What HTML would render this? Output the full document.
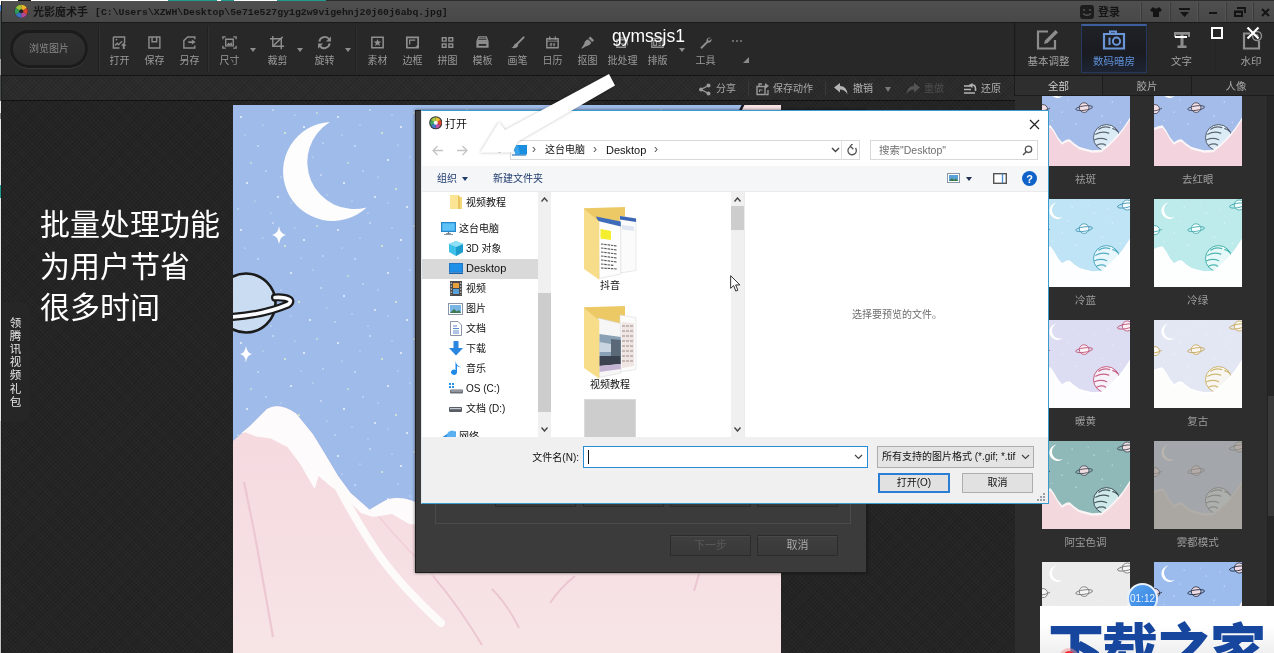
<!DOCTYPE html>
<html lang="zh-CN">
<head>
<meta charset="utf-8">
<title>光影魔术手</title>
<style>
*{box-sizing:border-box;margin:0;padding:0}
html,body{width:1274px;height:653px;overflow:hidden;background:#232323;font-family:"Liberation Sans","Noto Sans CJK SC",sans-serif;}
.abs{position:absolute}
#root{position:absolute;left:0;top:0;width:1274px;height:653px;overflow:hidden;background:#232323;opacity:.999}
.pat{background-color:#242424;background-image:repeating-linear-gradient(45deg,rgba(255,255,255,.018) 0 1px,transparent 1px 3px),repeating-linear-gradient(-45deg,rgba(0,0,0,.10) 0 1px,transparent 1px 3px);}
/* title bar */
#title{left:2px;top:1px;width:1272px;height:22px;background:linear-gradient(#4f4f4f,#484848);border-bottom:1px solid #1a1a1a}
#title .t{position:absolute;left:31px;top:3px;font:bold 11px/16px "Liberation Sans","Noto Sans CJK SC",sans-serif;color:#151515;white-space:nowrap}
#title .t b{font:bold 9.8px/16px "Liberation Mono",monospace;margin-left:7px;position:relative;top:-1px}
.wb{position:absolute;top:1px;height:20px;border-left:1px solid #3a3a3a;box-shadow:-1px 0 0 #555}
/* toolbar */
#tb{left:2px;top:23px;width:1272px;height:53px;background:#282828;border-bottom:1px solid #141414}
.ti{position:absolute;top:0;width:40px;height:52px;text-align:center;color:#9a9a9a;font-size:10px}
.ti svg{position:absolute;left:11.500px;top:12px;width:17px;height:15.100px;overflow:visible}
.ti span{position:absolute;left:-9px;right:-10px;top:30.500px;line-height:14px;white-space:nowrap}
.dd{position:absolute;top:25px;width:0;height:0;border:3px solid transparent;border-top:4px solid #8c8c8c}
.sep{position:absolute;top:3px;width:2px;height:46px;background:#212121;border-right:1px solid #303030}
.rt{position:absolute;top:1px;height:49px;text-align:center;color:#a2a2a2;font-size:10.500px;border-left:1px solid #242424}
.rt span{position:absolute;left:0;right:0;top:30px;line-height:14px}
.rt svg{position:absolute;top:5px;left:50%;margin-left:-12px;width:24px;height:21px;overflow:visible}
/* sub bar */
#sb{left:2px;top:76px;width:1013px;height:25px;border-bottom:1px solid #121212;background-color:#2b2b2b}
#sb .a{position:absolute;top:6px;line-height:14px;font-size:10px;color:#a8a8a8;white-space:nowrap}
#sb .v{position:absolute;top:5px;width:1px;height:14px;background:#3a3a3a}
/* right panel */
#rp{left:1015px;top:76px;width:259px;height:577px;background:#2d2d2d}
.stab{position:absolute;top:0;height:20px;background:#2b2b2b;border:1px solid #1c1c1c;border-top:none;color:#aaa;font-size:10.500px;line-height:21px;text-align:center}
.th{position:absolute;width:88.300px;height:88.300px;overflow:hidden}
.th svg{display:block;width:88.300px;height:88.300px}
.tl{position:absolute;width:120px;text-align:center;font-size:10.500px;line-height:14px;color:#9c9c9c}
</style>
</head>
<body>
<div id="root">
<svg width="0" height="0" style="position:absolute">
<defs>
<symbol id="scene" viewBox="0 0 88 88">
  <rect width="88" height="88" fill="var(--sky)"/>
  <g fill="var(--star)"><circle cx="30" cy="8" r=".6"/><circle cx="52" cy="14" r=".6"/><circle cx="70" cy="24" r=".6"/><circle cx="20" cy="34" r=".6"/><circle cx="60" cy="38" r=".6"/><circle cx="34" cy="46" r=".6"/><circle cx="78" cy="44" r=".5"/><circle cx="10" cy="42" r=".5"/><circle cx="46" cy="6" r=".5"/><circle cx="26" cy="22" r=".5"/><circle cx="66" cy="10" r=".5"/></g>
  <path d="M14.500 3.500A8.200 8.200 0 1 0 21 17.800A7.800 7.800 0 0 1 14.500 3.500z" fill="var(--moon)"/>
  <g stroke="var(--ln)" stroke-width=".9" fill="var(--pl)"><circle cx="42" cy="29.500" r="4.800"/><ellipse cx="42" cy="30" rx="8.500" ry="2.200" fill="none" transform="rotate(-8 42 30)"/></g>
  <g stroke="var(--ln)" stroke-width=".9" fill="var(--pl)"><circle cx="85" cy="6" r="5"/><ellipse cx="83" cy="6.500" rx="8" ry="2.200" fill="none" transform="rotate(-10 83 6)"/></g>
  <g stroke="var(--ln)" stroke-width=".9" fill="var(--pl)"><circle cx="1" cy="31" r="4.500"/><path d="M-4 33Q4 33 8 30" fill="none"/></g>
  <circle cx="64.300" cy="59.400" r="13" fill="var(--big)" stroke="var(--ln2)" stroke-width=".9"/>
  <g stroke="var(--ln2)" stroke-width="1.200" fill="none" stroke-linecap="round" opacity=".85"><path d="M56.500 51q5.500-3.500 11-1.500"/><path d="M53.500 56q6.500-3.500 13-1"/><path d="M52.500 61.500q6.500-2.500 12 0"/><path d="M54.500 67q5.500-2.500 9 0"/><path d="M70.500 50.500q3.500 .5 5 3"/></g>
  <path d="M0 49.500L4 48L8.500 47L12 52L16 59L20 64L24 61.500L27.500 61L32 65L37 68.500L42 70L50 72L59 71.500L66 66L71 61L74 58L77.500 54L81 49.500L85 43.500L88 39V88H0z" fill="var(--snow)"/>
  <path d="M0 52L4 50.500L8.500 49.500L12 54.500L16 61.500L20 66.500L24 64L27.500 63.500L32 67.500L37 71L42 72.500L50 74.500L59 74L66 68.500L71 63.500L74 60.500L77.500 56.500L81 52L85 46L88 41.500V88H0z" fill="var(--mt)"/>
</symbol>
</defs>
</svg>
<style>
.dbt{position:absolute;width:81px;height:21px;background:linear-gradient(#3f3f3f,#393939);border:1px solid #2c2c2c;box-shadow:inset 0 1px 0 #484848;color:#a8a8a8;font-size:11px;line-height:19px;text-align:center}
#od{left:421px;top:110px;width:628px;height:394px;background:#fff;border:1px solid #3a9ccc;border-left-color:#dfeaf0;overflow:hidden}
.nv{top:30px;font-size:12px;line-height:16px;color:#555}
.nt{top:30px;font-size:10px;line-height:18px;color:#111;white-space:nowrap}
.cm{top:60px;font-size:10px;line-height:16px;color:#1f3b6e;white-space:nowrap}
.tr{position:absolute;font-size:10px;line-height:18px;color:#111;white-space:nowrap}
.fn{position:absolute;width:100px;text-align:center;font-size:10px;line-height:16px;color:#111}
</style>
<!-- canvas -->
<div class="abs pat" id="canvas" style="left:2px;top:101px;width:1013px;height:552px"></div>
<!-- main picture -->
<svg class="abs" id="pic" style="left:233px;top:105px" width="548" height="548" viewBox="0 0 548 548">
  <defs>
    <pattern id="stars" width="97" height="113" patternUnits="userSpaceOnUse">
      <g fill="#e9f3ff"><circle cx="8" cy="12" r="1"/><circle cx="40" cy="5" r=".8"/><circle cx="71" cy="22" r="1.1"/><circle cx="25" cy="41" r=".8"/><circle cx="58" cy="55" r="1"/><circle cx="88" cy="70" r=".8"/><circle cx="14" cy="78" r="1"/><circle cx="45" cy="92" r=".9"/><circle cx="77" cy="102" r="1"/><circle cx="33" cy="66" r=".7"/><circle cx="90" cy="38" r=".7"/><circle cx="5" cy="104" r=".7"/><circle cx="62" cy="10" r=".6"/><circle cx="30" cy="20" r=".6"/><circle cx="80" cy="52" r=".6"/><circle cx="48" cy="72" r=".6"/><circle cx="22" cy="96" r=".6"/><circle cx="94" cy="90" r=".6"/><circle cx="12" cy="30" r=".6"/><circle cx="68" cy="40" r=".6"/><circle cx="38" cy="108" r=".6"/><circle cx="58" cy="98" r=".6"/></g>
      <g fill="#e4f5c8"><circle cx="52" cy="28" r=".9"/><circle cx="18" cy="58" r=".8"/><circle cx="66" cy="84" r=".9"/><circle cx="84" cy="8" r=".8"/></g>
    </pattern>
    <linearGradient id="mtg" x1="0" y1="0" x2="0" y2="1"><stop offset="0" stop-color="#f5d9df"/><stop offset=".6" stop-color="#f6dfe3"/><stop offset="1" stop-color="#f7e5e6"/></linearGradient>
  </defs>
  <rect width="548" height="548" fill="#9fbbe9"/>
  <rect width="548" height="548" fill="url(#stars)"/>
  <!-- top right planet sliver -->
  <path d="M510 -2L548 -2V7L506 7z" fill="#f7e1e5"/>
  <path d="M506 8L511 -2" stroke="#15151f" stroke-width="2.500"/>
  <!-- moon -->
  <path d="M97 17A49.500 49.500 0 1 0 133.600 102.400A46.900 46.900 0 0 1 97 17z" fill="#fdfdfd"/>
  <!-- sparkles -->
  <path d="M46 121Q47 129 53 130Q47 131 46 139Q45 131 39 130Q45 129 46 121z" fill="#fff"/>
  <path d="M13 241Q14 248 19 249Q14 250 13 257Q12 250 7 249Q12 248 13 241z" fill="#fff"/>
  <!-- planet -->
  <circle cx="13" cy="198" r="29.5" fill="#c9dcf2" stroke="#1a1a1a" stroke-width="2.6"/>
  <path d="M-2 212Q30 210 55 199.500Q61 195 52 193Q47 192 42 192.500" fill="none" stroke="#1a1a1a" stroke-width="8" stroke-linecap="round"/>
  <path d="M-2 212Q30 210 55 199.500Q61 195 52 193Q47 192 42 192.500" fill="none" stroke="#fafcff" stroke-width="3.6" stroke-linecap="round"/>
  <!-- mountains -->
  <path d="M0 336L17 321L34 304Q46 297 63 308.500L80 329.500L92.500 350L105 371L117.500 388L136.500 404.700L151 396.300Q163 390 180 396L200 410L548 440V548H0z" fill="url(#mtg)"/>
  <path d="M136.500 404.700L151 396.300Q163 390 180 396L200 410L548 440V452L200 421L176 419L159 409L140 412z" fill="#fdfbfb"/>
  <path d="M8 328.500L17 321L34 304Q46 297 63 308.500L80 329.500L92.500 350L105 371L117.500 388L136.500 404.700L140 412L128 408L112 392L96 380L85.700 371L81.600 384L67 358.700L54.400 342L37.600 333.600L23 331.500L12.500 327.300z" fill="#fdfbfb"/>
  <path d="M100 372Q125 420 146 450T208 518" fill="none" stroke="#fdfafa" stroke-width="8" stroke-linecap="round"/>
  <path d="M146 412Q170 440 200 470" fill="none" stroke="#efc9d4" stroke-width="1.500" opacity=".7"/>
  <path d="M11 377Q20 420 24 442T40 532" fill="none" stroke="#e9bfcc" stroke-width="2.200" opacity=".75"/>
  <path d="M200 471Q225 500 249 540M259 484Q275 500 286 523M342 471Q328 482 317 498M466 469L461 486" fill="none" stroke="#e6b8c6" stroke-width="1.800" opacity=".7"/>
</svg>
<!-- title -->
<div class="abs" id="title">
  <svg class="abs" style="left:12.400px;top:3.400px" width="14.500" height="14.500" viewBox="0 0 17 17"><circle cx="8.5" cy="8.5" r="8" fill="#2a2a2a"/><path d="M8.5 8.5L8.5 1A7.5 7.5 0 0 1 15 4.7z" fill="#e8b52a"/><path d="M8.5 8.5L15 4.7A7.5 7.5 0 0 1 15 12.3z" fill="#d8432e"/><path d="M8.5 8.5L15 12.3A7.5 7.5 0 0 1 8.5 16z" fill="#b24a9a"/><path d="M8.5 8.5L8.5 16A7.5 7.5 0 0 1 2 12.3z" fill="#3a6fc4"/><path d="M8.5 8.5L2 12.3A7.5 7.5 0 0 1 2 4.7z" fill="#2f9a5a"/><path d="M8.5 8.5L2 4.7A7.5 7.5 0 0 1 8.5 1z" fill="#9bc23a"/><circle cx="8.5" cy="8.5" r="2.4" fill="#222"/></svg>
  <div class="t">光影魔术手<b>[C:\Users\XZWH\Desktop\5e71e527gy1g2w9vigehnj20j60j6abq.jpg]</b></div>
  <svg class="abs" style="left:1078px;top:4px" width="14" height="14" viewBox="0 0 14 14"><rect width="14" height="14" rx="3" fill="#1c1c1c"/><circle cx="4" cy="5" r="1" fill="#555"/><circle cx="10" cy="5" r="1" fill="#555"/><path d="M3 8.5Q7 12 11 8.5" stroke="#555" stroke-width="1.4" fill="none"/></svg>
  <div class="abs" style="left:1096px;top:3px;font-size:11px;line-height:16px;color:#141414;font-weight:bold">登录</div>
  <div class="wb" style="left:1139px;width:29px"><svg class="abs" style="left:8px;top:5px" width="12" height="10" viewBox="0 0 12 10"><path d="M3 0L5 1.5H7L9 0L12 3L10 5L9 4.5V10H3V4.5L2 5L0 3z" fill="#141414"/></svg></div>
  <div class="wb" style="left:1168px;width:28px"><svg class="abs" style="left:8px;top:6px" width="11" height="9" viewBox="0 0 11 9"><path d="M0 0H11V2H0zM1 4H10L5.5 9z" fill="#141414"/></svg></div>
  <div class="wb" style="left:1196px;width:28px"><div class="abs" style="left:10px;top:10px;width:8px;height:2px;background:#141414"></div></div>
  <div class="wb" style="left:1224px;width:27px"><svg class="abs" style="left:7px;top:5px" width="12" height="10" viewBox="0 0 12 10"><path d="M3 0H12V6H10V2H3z" fill="#141414"/><path d="M0 3.5H9V10H0zM2 6V8H7V6z" fill="#141414" fill-rule="evenodd"/></svg></div>
  <div class="wb" style="left:1251px;width:21px"><svg class="abs" style="left:7px;top:6px" width="9" height="9" viewBox="0 0 9 9"><path d="M1 1L8 8M8 1L1 8" stroke="#141414" stroke-width="2"/></svg></div>
</div>
<!-- toolbar -->
<div class="abs" id="tb">
  <div class="abs" style="left:8px;top:7px;width:78px;height:38px;border-radius:19px;background:#1b1b1b;box-shadow:0 1px 0 #383838"></div>
  <div class="abs" style="left:11px;top:10px;width:72px;height:32px;border-radius:16px;background:linear-gradient(#303030,#2a2a2a);color:#888;font-size:10px;line-height:31px;text-align:center">浏览图片</div>
  <div class="sep" style="left:96px"></div>
  <div class="ti" style="left:97px"><svg viewBox="0 0 18 16"><path d="M2.500 2.200H14.400V8.500M9 13.800H2.500V2.200" fill="none" stroke="#8c8c8c" stroke-width="1.500"/><path d="M4.200 11.200L6.500 8.800L8 10.300L11.800 6.500" fill="none" stroke="#8c8c8c" stroke-width="1.400"/><circle cx="5.800" cy="4.900" r=".9" fill="#8c8c8c"/><path d="M13.500 7.900L16.400 11.400H14.500V14.900H12.500V11.400H10.600z" fill="#8c8c8c"/></svg><span>打开</span></div>
  <div class="ti" style="left:132px"><svg viewBox="0 0 18 16"><path d="M3.100 2.200H14.700V13.800H3.100z" fill="none" stroke="#8c8c8c" stroke-width="1.500"/><path d="M6.400 2.200V7.200H11.300V2.200" fill="none" stroke="#8c8c8c" stroke-width="1.500"/></svg><span>保存</span></div>
  <div class="ti" style="left:167px"><svg viewBox="0 0 18 16"><path d="M14.600 4.600V2.200H7L3 6V13.800H14.600V11" fill="none" stroke="#8c8c8c" stroke-width="1.500"/><path d="M7.700 6.500H11.500V4.800L15.500 7.500L11.500 10.200V8.500H7.700z" fill="#8c8c8c"/></svg><span>另存</span></div>
  <div class="sep" style="left:205px"></div>
  <div class="ti" style="left:207px"><svg viewBox="0 0 18 16"><path d="M2 4.5V2H5M13 2H16V4.5M16 11.5V14H13M5 14H2V11.5" fill="none" stroke="#8f8f8f" stroke-width="1.4"/><path d="M5 4.5H13V11.5H5z" fill="none" stroke="#8f8f8f" stroke-width="1.4"/><path d="M6 10.5L8 8L9.5 9.5L11 7.5L12 10.5z" fill="#8f8f8f"/></svg><span>尺寸</span></div>
  <div class="dd" style="left:248px"></div>
  <div class="ti" style="left:255px"><svg viewBox="0 0 18 16"><path d="M4 1V12H16" fill="none" stroke="#8f8f8f" stroke-width="1.5"/><path d="M1 4H13V15" fill="none" stroke="#8f8f8f" stroke-width="1.5"/><path d="M4.5 11.5L14.5 2" stroke="#8f8f8f" stroke-width="1.5"/></svg><span>裁剪</span></div>
  <div class="dd" style="left:295px"></div>
  <div class="ti" style="left:302px"><svg viewBox="0 0 18 16"><path d="M3.5 7A5.8 5.8 0 0 1 14 4.5" fill="none" stroke="#8f8f8f" stroke-width="2"/><path d="M15.8 1.5V7H10.5z" fill="#8f8f8f"/><path d="M14.5 9A5.8 5.8 0 0 1 4 11.5" fill="none" stroke="#8f8f8f" stroke-width="2"/><path d="M2.2 14.5V9H7.5z" fill="#8f8f8f"/></svg><span>旋转</span></div>
  <div class="dd" style="left:343px"></div>
  <div class="sep" style="left:353px"></div>
  <div class="ti" style="left:355px"><svg viewBox="0 0 18 16"><path d="M3 2.5H15V13.5H3z" fill="none" stroke="#8f8f8f" stroke-width="1.6"/><path d="M9 4.3L10.2 7H13L10.8 8.8L11.6 11.6L9 10L6.4 11.6L7.2 8.8L5 7H7.8z" fill="#8f8f8f"/></svg><span>素材</span></div>
  <div class="ti" style="left:390px"><svg viewBox="0 0 18 16"><path d="M3 2.5H15V13.5H3z" fill="none" stroke="#8f8f8f" stroke-width="1.8"/><path d="M6 10V5.5H12" fill="none" stroke="#8f8f8f" stroke-width="1.3"/><path d="M15 10L11 13.5H15z" fill="#8f8f8f"/></svg><span>边框</span></div>
  <div class="ti" style="left:425px"><svg viewBox="0 0 18 16"><path d="M3.5 3H7.5V6.5H3.5zM10.500 3H14.5V6.5H10.5zM3.500 9.500H7.5V13H3.5zM10.500 9.500H14.5V13H10.5z" fill="none" stroke="#8f8f8f" stroke-width="1.5"/></svg><span>拼图</span></div>
  <div class="ti" style="left:460px"><svg viewBox="0 0 18 16"><path d="M5 2H13L14.5 6H3.5z" fill="none" stroke="#8f8f8f" stroke-width="1.4"/><path d="M2.500 6.500H15.500V13.500H2.500z" fill="#8f8f8f"/><path d="M5 9.500H13V11.500H5z" fill="#2a2a2a"/><path d="M4.500 4H13.500" stroke="#8f8f8f" stroke-width="1"/></svg><span>模板</span></div>
  <div class="ti" style="left:495px"><svg viewBox="0 0 18 16"><path d="M15.500 2.500L8.500 9.500" stroke="#8f8f8f" stroke-width="2" stroke-linecap="round"/><path d="M8.500 8.500Q5.500 9 5 11.500Q4.500 13 2.500 13.500Q7 15 9.500 12Q10.500 10.500 8.500 8.500z" fill="#8f8f8f"/></svg><span>画笔</span></div>
  <div class="ti" style="left:530px"><svg viewBox="0 0 18 16"><path d="M3 4H15V13.500H3z" fill="none" stroke="#8f8f8f" stroke-width="1.5"/><path d="M6 1.500V5M12 1.500V5" stroke="#8f8f8f" stroke-width="1.5"/><path d="M3 6.500H15" stroke="#8f8f8f" stroke-width="1"/><path d="M6.500 9H8.500V10H6.500V11.500H8.500M10 9H11.500V10.200H10V11.500H11.800" fill="none" stroke="#8f8f8f" stroke-width=".9"/></svg><span>日历</span></div>
  <div class="ti" style="left:565px"><svg viewBox="0 0 18 16"><path d="M12 1.500L16 5.500L14 7.500L10 3.500z" fill="#8f8f8f"/><path d="M9.500 4.500L13 8Q11.500 11.500 7.500 12L3 14.500L2.500 14L5.500 9.500Q6 5.500 9.500 4.500z" fill="#8f8f8f"/></svg><span>抠图</span></div>
  <div class="ti" style="left:600px"><svg viewBox="0 0 18 16"><path d="M3 5H12V13H3z" fill="none" stroke="#8f8f8f" stroke-width="1.4"/><path d="M5 3H14V11" fill="none" stroke="#8f8f8f" stroke-width="1.2"/><path d="M5 11L7 8.500L8.500 10L10 8.500" fill="none" stroke="#8f8f8f" stroke-width="1.1"/></svg><span>批处理</span></div>
  <div class="ti" style="left:635px"><svg viewBox="0 0 18 16"><path d="M3 3.500H15V13H3z" fill="none" stroke="#8f8f8f" stroke-width="1.4"/><path d="M5 6H8V11H5zM10 6H13M10 8.500H13M10 11H13" fill="none" stroke="#8f8f8f" stroke-width="1.2"/></svg><span>排版</span></div>
  <div class="dd" style="left:677px"></div>
  <div class="ti" style="left:683px"><svg viewBox="0 0 18 16"><path d="M14.800 2.800A3.600 3.600 0 0 0 10 6.800L3.500 13.300L5 14.800L11.500 8.300A3.600 3.600 0 0 0 15.500 4L13.300 6L11.800 5.800L11.500 4.300z" fill="#8f8f8f"/></svg><span>工具</span></div>
  <div class="abs" style="left:730px;top:17px;width:2px;height:2px;background:#6a6a6a;box-shadow:4px 0 0 #6a6a6a,8px 0 0 #6a6a6a"></div>
  <svg class="abs" style="left:741px;top:34px" width="6" height="6" viewBox="0 0 6 6"><path d="M6 0V6H0z" fill="#8a8a8a"/></svg>
  <!-- right tabs -->
  <div class="abs" style="left:1012px;top:0;width:1px;height:52px;background:#1a1a1a"></div>
  <div class="rt" style="left:1013px;width:66px"><svg viewBox="0 0 24 21" style="margin-left:-14px"><path d="M20 11V19.500H3V2.500H13" fill="none" stroke="#8d8d8d" stroke-width="2.200"/><path d="M20.500 1L23 3.500L12.500 14L9 15L10 11.500z" fill="#8d8d8d"/></svg><span>基本调整</span></div>
  <div class="rt" style="left:1079px;width:66px;color:#5f8fd6;background:linear-gradient(#1f2226,#191b20 60%,#1e2433);border:1px solid #26385c;border-top:2px solid #3d5f9e"><svg viewBox="0 0 24 21" style="top:3px"><path d="M2 5H22V19.500H2z" fill="none" stroke="#6a96d8" stroke-width="2.200"/><path d="M8 5V2.500H14V5" fill="none" stroke="#6a96d8" stroke-width="2"/><path d="M7.500 8.500V16" stroke="#6a96d8" stroke-width="2"/><circle cx="14.500" cy="12.200" r="3.600" fill="none" stroke="#6a96d8" stroke-width="2"/></svg><span style="top:28px">数码暗房</span></div>
  <div class="rt" style="left:1145px;width:68px"><svg viewBox="0 0 24 21"><path d="M4 3H20V8H18V5.800H13.500V16.500H16.500V19H7.500V16.500H10.500V5.800H6V8H4z" fill="#8d8d8d"/></svg><span>文字</span></div>
  <div class="rt" style="left:1213px;width:59px"><svg viewBox="0 0 24 21" style="margin-left:-6px"><path d="M20 12V19.500H5V4.500H11" fill="none" stroke="#8d8d8d" stroke-width="2.200"/><circle cx="18" cy="7" r="4.500" fill="none" stroke="#8d8d8d" stroke-width="1.500"/><path d="M18 4.500L20 7.500H16z" fill="#8d8d8d"/></svg><span style="left:12px">水印</span></div>
</div>
<!-- sub bar -->
<div class="abs pat" id="sb">
  <svg class="abs" style="left:696px;top:7px" width="13" height="13" viewBox="0 0 13 13"><path d="M10.500 2.500L3 6.500L10.500 10.500" fill="none" stroke="#9a9a9a" stroke-width="1.400"/><circle cx="10.500" cy="2.500" r="2" fill="#9a9a9a"/><circle cx="3" cy="6.500" r="2" fill="#9a9a9a"/><circle cx="10.500" cy="10.500" r="2" fill="#9a9a9a"/></svg>
  <div class="a" style="left:714px">分享</div>
  <div class="v" style="left:746px"></div>
  <svg class="abs" style="left:754px;top:6px" width="14" height="14" viewBox="0 0 14 14"><path d="M1 4.500H9V12.500H1z" fill="none" stroke="#9a9a9a" stroke-width="1.400"/><path d="M3 4V2H6" fill="none" stroke="#9a9a9a" stroke-width="1.300"/><path d="M3.500 10V8H6.500" fill="none" stroke="#9a9a9a" stroke-width="1.100"/><path d="M9 1L13 4L9 7z" fill="#9a9a9a"/><path d="M12 8V12.500H10" fill="none" stroke="#9a9a9a" stroke-width="1.300"/></svg>
  <div class="a" style="left:771px">保存动作</div>
  <div class="v" style="left:823px"></div>
  <svg class="abs" style="left:832px;top:7px" width="14" height="12" viewBox="0 0 14 12"><path d="M0 4.500L6 0V3Q13 3 13.500 11.500Q11 6.500 6 6.500V9.500z" fill="#b4b4b4"/></svg>
  <div class="a" style="left:851px;color:#b2b2b2">撤销</div>
  <div class="abs" style="left:883px;top:11px;width:0;height:0;border:3px solid transparent;border-top:5px solid #7a7a7a"></div>
  <svg class="abs" style="left:904px;top:7px" width="14" height="12" viewBox="0 0 14 12"><path d="M14 4.500L8 0V3Q1 3 .5 11.500Q3 6.500 8 6.500V9.500z" fill="#555"/></svg>
  <div class="a" style="left:922px;color:#4e4e4e">重做</div>
  <svg class="abs" style="left:961px;top:6px" width="14" height="13" viewBox="0 0 14 13"><path d="M1 4H7M1 7.500H8M1 11H12" stroke="#b4b4b4" stroke-width="1.700"/><path d="M6 3.500Q12.500 1.500 12.500 6.500V9" fill="none" stroke="#b4b4b4" stroke-width="1.600"/><path d="M9.500 1L5.500 3.500L9.500 6z" fill="#b4b4b4"/></svg>
  <div class="a" style="left:979px;color:#b2b2b2">还原</div>
</div>
<!-- right panel -->
<div class="abs" id="rp">
  <div class="th" style="left:26.5px;top:2px;--sky:#a3bcea;--star:#e6f0ff;--moon:#ffffff;--ln:#4a4a5a;--pl:#f3dfe6;--big:#dcecf6;--ln2:#46505e;--snow:#fbf6f8;--mt:#f3d3dd"><svg viewBox="0 0 88 88"><use href="#scene"/></svg></div>
  <div class="tl" style="left:10.5px;top:96px">祛斑</div>
  <div class="th" style="left:138.8px;top:2px;--sky:#a3bcea;--star:#e6f0ff;--moon:#ffffff;--ln:#4a4a5a;--pl:#f3dfe6;--big:#dcecf6;--ln2:#46505e;--snow:#fbf6f8;--mt:#f3d3dd"><svg viewBox="0 0 88 88"><use href="#scene"/></svg></div>
  <div class="tl" style="left:122.8px;top:96px">去红眼</div>
  <div class="th" style="left:26.5px;top:123px;--sky:#bfe4f5;--star:#f2fbff;--moon:#ffffff;--ln:#4a9ab8;--pl:#f4fbfe;--big:#e8f7fc;--ln2:#3aa0b8;--snow:#ffffff;--mt:#fdfeff"><svg viewBox="0 0 88 88"><use href="#scene"/></svg></div>
  <div class="tl" style="left:10.5px;top:217px">冷蓝</div>
  <div class="th" style="left:138.8px;top:123px;--sky:#bdeaea;--star:#f2ffff;--moon:#ffffff;--ln:#4aaeb0;--pl:#f4fefe;--big:#e6f9f8;--ln2:#34aaa4;--snow:#ffffff;--mt:#fdfffe"><svg viewBox="0 0 88 88"><use href="#scene"/></svg></div>
  <div class="tl" style="left:122.8px;top:217px">冷绿</div>
  <div class="th" style="left:26.5px;top:244px;--sky:#dcdcf3;--star:#f6f6ff;--moon:#ffffff;--ln:#c0587a;--pl:#fbf2f6;--big:#f6f2fa;--ln2:#c24a72;--snow:#ffffff;--mt:#fdfcfe"><svg viewBox="0 0 88 88"><use href="#scene"/></svg></div>
  <div class="tl" style="left:10.5px;top:338px">暖黄</div>
  <div class="th" style="left:138.8px;top:244px;--sky:#e3e7f4;--star:#fafbff;--moon:#ffffff;--ln:#c8a860;--pl:#fbf8f2;--big:#f7f6f2;--ln2:#c9ae5e;--snow:#ffffff;--mt:#fdfdfc"><svg viewBox="0 0 88 88"><use href="#scene"/></svg></div>
  <div class="tl" style="left:122.8px;top:338px">复古</div>
  <div class="th" style="left:26.5px;top:365px;--sky:#8fb9b9;--star:#d8eeee;--moon:#ffffff;--ln:#44505a;--pl:#f0dce0;--big:#cfe9ea;--ln2:#34444a;--snow:#fbf4f5;--mt:#f3d9de"><svg viewBox="0 0 88 88"><use href="#scene"/></svg></div>
  <div class="tl" style="left:10.5px;top:459px">阿宝色调</div>
  <div class="th" style="left:138.8px;top:365px;--sky:#a3a6ab;--star:#adb0b4;--moon:#b9b5ae;--ln:#8a8884;--pl:#b4aca8;--big:#adb1ae;--ln2:#84847e;--snow:#b1ada8;--mt:#aaa6a2"><svg viewBox="0 0 88 88"><use href="#scene"/></svg></div>
  <div class="tl" style="left:122.8px;top:459px">雾都模式</div>
  <div class="th" style="left:26.5px;top:486px;--sky:#ebebeb;--star:#f6f6f6;--moon:#ffffff;--ln:#7a7a7a;--pl:#f6f6f6;--big:#f0f0f0;--ln2:#7a7a7a;--snow:#ffffff;--mt:#f8f8f8"><svg viewBox="0 0 88 88"><use href="#scene"/></svg></div>
  <div class="th" style="left:138.8px;top:486px;--sky:#9dbcee;--star:#dbe9ff;--moon:#ffffff;--ln:#2a3448;--pl:#f0dbe4;--big:#d7eaf8;--ln2:#27344c;--snow:#fbf6f8;--mt:#f0d0dc"><svg viewBox="0 0 88 88"><use href="#scene"/></svg></div>
  <div class="stab" style="left:-1px;width:89px;color:#cfcfcf;background:#2e2e2e">全部</div>
  <div class="stab" style="left:88px;width:89px;border-left:none">胶片</div>
  <div class="stab" style="left:177px;width:83px;border-left:none;padding-left:6px">人像</div>
  <div class="abs" style="left:252px;top:20px;width:7px;height:557px;background:#262626;border-left:1px solid #222"></div>
  <div class="abs" style="left:253px;top:320px;width:6px;height:120px;background:#3a3a3a"></div>
</div>
<!-- dark wizard dialog behind -->
<div class="abs" id="dk" style="left:415px;top:110px;width:452px;height:463px;background:#3b3b3b;border:1px solid #1d1d1d;box-shadow:0 0 3px rgba(0,0,0,.6)">
  <div class="abs" style="left:19px;top:9px;width:416px;height:404px;border:1px solid #4b4b4b"></div>
  <div class="dbt" style="left:79px;top:375px"></div><div class="dbt" style="left:167px;top:375px"></div><div class="dbt" style="left:254px;top:375px"></div><div class="dbt" style="left:341px;top:375px"></div>
  <div class="dbt" style="left:254px;top:424px;color:#5a5a5a">下一步</div>
  <div class="dbt" style="left:341px;top:424px">取消</div>
</div>
<!-- open dialog -->
<div class="abs" id="od">
  <svg class="abs" style="left:6.500px;top:5.300px" width="13.500" height="13.500" viewBox="0 0 17 17"><circle cx="8.5" cy="8.5" r="8.3" fill="#3a3a3a"/><path d="M8.5 8.5L8.5 1.500A7 7 0 0 1 14.600 5z" fill="#f0c030"/><path d="M8.500 8.500L14.600 5A7 7 0 0 1 14.600 12z" fill="#e0452e"/><path d="M8.500 8.500L14.600 12A7 7 0 0 1 8.500 15.500z" fill="#c050a0"/><path d="M8.500 8.500L8.500 15.500A7 7 0 0 1 2.400 12z" fill="#4078d0"/><path d="M8.500 8.500L2.400 12A7 7 0 0 1 2.400 5z" fill="#38a860"/><path d="M8.500 8.500L2.400 5A7 7 0 0 1 8.500 1.500z" fill="#a8cc40"/><circle cx="8.500" cy="8.500" r="2.600" fill="#f4f4f4"/></svg>
  <div class="abs" style="left:23px;top:5px;font-size:11px;line-height:16px;color:#111">打开</div>
  <svg class="abs" style="left:607px;top:8px" width="11" height="11" viewBox="0 0 11 11"><path d="M1 1L10 10M10 1L1 10" stroke="#222" stroke-width="1.200"/></svg>
  <!-- nav row -->
  <svg class="abs" style="left:10px;top:34px" width="12" height="11" viewBox="0 0 12 11"><path d="M11 5.500H1.500M5.500 1L1 5.500L5.500 10" fill="none" stroke="#c4c4c4" stroke-width="1.300"/></svg>
  <svg class="abs" style="left:34px;top:34px" width="12" height="11" viewBox="0 0 12 11"><path d="M1 5.500H10.500M6.500 1L11 5.500L6.500 10" fill="none" stroke="#c4c4c4" stroke-width="1.300"/></svg>
  <svg class="abs" style="left:75px;top:39px" width="5" height="4" viewBox="0 0 5 4"><path d="M.5 .5L2.500 3L4.500 .5" fill="none" stroke="#555" stroke-width="1"/></svg>
  <div class="abs" style="left:88px;top:29px;width:350px;height:20px;border:1px solid #d9d9d9;background:#fff"></div>
  <svg class="abs" style="left:90px;top:34px" width="15" height="11" viewBox="0 0 15 11"><path d="M1 0H15V9.500H3.500z" fill="#1a8fe0"/><path d="M1 0H6L8 9.500H3.500z" fill="#3aa5ee"/><path d="M0 10H14" stroke="#2a78c0" stroke-width="1.200"/></svg>
  <div class="abs nv" style="left:110px">›</div>
  <div class="abs nt" style="left:123px">这台电脑</div>
  <div class="abs nv" style="left:171px">›</div>
  <div class="abs nt" style="left:184px;font-size:11px">Desktop</div>
  <div class="abs nv" style="left:232px">›</div>
  <div class="abs" style="left:419px;top:30px;width:1px;height:19px;background:#e2e2e2"></div>
  <svg class="abs" style="left:409px;top:36px" width="9" height="6" viewBox="0 0 9 6"><path d="M1 1L4.500 4.500L8 1" fill="none" stroke="#444" stroke-width="1.400"/></svg>
  <svg class="abs" style="left:424px;top:33px" width="12" height="13" viewBox="0 0 12 13"><path d="M9.500 4A4.200 4.200 0 1 1 5 2.500" fill="none" stroke="#555" stroke-width="1.300"/><path d="M4.500 0V4.500H9" fill="none" stroke="#555" stroke-width="1.300" transform="rotate(45 6 2.500) translate(0 -1)"/></svg>
  <div class="abs" style="left:448px;top:29px;width:168px;height:20px;border:1px solid #d9d9d9;background:#fff;font-size:10.500px;line-height:18px;color:#6e6e6e;padding-left:8px">搜索"Desktop"</div>
  <svg class="abs" style="left:600px;top:34px" width="11" height="11" viewBox="0 0 11 11"><circle cx="6.500" cy="4.300" r="3.200" fill="none" stroke="#555" stroke-width="1.300"/><path d="M4.300 6.700L1 10" stroke="#555" stroke-width="1.600"/></svg>
  <!-- cmd bar -->
  <div class="abs" style="left:0;top:55px;width:626px;height:26px;background:#f5f6f7;border-bottom:1px solid #ebebeb"></div>
  <div class="abs cm" style="left:15px">组织</div>
  <div class="abs" style="left:40px;top:66px;width:0;height:0;border:3.500px solid transparent;border-top:4px solid #1f3b6e"></div>
  <div class="abs cm" style="left:71px">新建文件夹</div>
  <svg class="abs" style="left:525px;top:62px" width="13" height="11" viewBox="0 0 13 11"><rect x=".5" y=".5" width="12" height="9" fill="#fff" stroke="#8a96a8"/><rect x="2" y="2" width="9" height="6" fill="#5aa0d8"/><path d="M2 8L5 5L7 7L9 5.500L11 8z" fill="#3a7a48"/></svg>
  <div class="abs" style="left:544px;top:66px;width:0;height:0;border:3.500px solid transparent;border-top:4px solid #1f3050"></div>
  <svg class="abs" style="left:571px;top:62px" width="14" height="11" viewBox="0 0 14 11"><rect x=".7" y=".7" width="12.600" height="9.600" fill="#fff" stroke="#555" stroke-width="1.400"/><path d="M9.500 1V10" stroke="#4a90d0" stroke-width="1.400"/></svg>
  <svg class="abs" style="left:600px;top:60px" width="15" height="15" viewBox="0 0 15 15"><circle cx="7.500" cy="7.500" r="7.500" fill="#0f63c8"/><text x="7.500" y="11.500" text-anchor="middle" font-family="Liberation Sans,sans-serif" font-weight="bold" font-size="11" fill="#fff">?</text></svg>
  <!-- tree -->
  <div class="abs" id="tree" style="left:0;top:81px;width:116px;height:245px;overflow:hidden;background:#fff">
    <div class="abs" style="left:0;top:67px;width:116px;height:20px;background:#d9d9d9"></div>
    <svg class="abs" style="left:28px;top:2px" width="12" height="15" viewBox="0 0 12 15"><path d="M0 1H8L10 3H12V15H0z" fill="#f5d87a"/><path d="M8 1V15H0V1z" fill="#fbe494"/><path d="M8 1L10 3V15H8z" fill="#e8c55e"/></svg>
    <div class="tr" style="left:44px;top:2px">视频教程</div>
    <svg class="abs" style="left:19px;top:30px" width="15" height="13" viewBox="0 0 15 13"><rect x=".5" y=".5" width="14" height="9" fill="#35a8ea" stroke="#2a86c8"/><rect x="1.500" y="1.500" width="12" height="7" fill="#5ec2f6"/><path d="M5 12H10M7.500 10V12" stroke="#6a7a8a" stroke-width="1.300"/><path d="M3 12.500H12" stroke="#8a98a8" stroke-width="1"/></svg>
    <div class="tr" style="left:37px;top:28px">这台电脑</div>
    <svg class="abs" style="left:27px;top:49px" width="14" height="15" viewBox="0 0 14 15"><path d="M7 0L14 3V11L7 15L0 11V3z" fill="#3fc0e8"/><path d="M7 6L14 3V11L7 15z" fill="#1e9ccc"/><path d="M7 6L0 3L7 0L14 3z" fill="#8fe0f6"/></svg>
    <div class="tr" style="left:44px;top:48px">3D 对象</div>
    <svg class="abs" style="left:27px;top:71px" width="14" height="11.400" viewBox="0 0 16 13"><rect x=".5" y=".5" width="15" height="10" fill="#1e90e8" stroke="#1670c0"/><path d="M0 12H16" stroke="#1c60a8" stroke-width="1.400"/></svg>
    <div class="tr" style="left:44px;top:67px;font-size:11px">Desktop</div>
    <svg class="abs" style="left:28px;top:89px" width="12" height="15" viewBox="0 0 12 15"><rect width="12" height="15" fill="#4a4a4a"/><rect x="3" y="2" width="6" height="5" fill="#e8a040"/><rect x="3" y="8" width="6" height="5" fill="#58a0d8"/><path d="M1.200 1.500V14M10.800 1.500V14" stroke="#ddd" stroke-width="1" stroke-dasharray="1.500 1.500"/></svg>
    <div class="tr" style="left:44px;top:88px">视频</div>
    <svg class="abs" style="left:26px;top:111px" width="15" height="12" viewBox="0 0 15 12"><rect x=".5" y=".5" width="14" height="11" fill="#fff" stroke="#8a96a8"/><rect x="2" y="2" width="11" height="8" fill="#78b4e4"/><path d="M2 10L6 6L9 8.500L11 7L13 10z" fill="#3d7a50"/></svg>
    <div class="tr" style="left:44px;top:108px">图片</div>
    <svg class="abs" style="left:28px;top:129px" width="12" height="15" viewBox="0 0 12 15"><path d="M.5 .5H8L11.500 4V14.500H.5z" fill="#fff" stroke="#8a94a4"/><path d="M3 5H7M3 7.500H9M3 10H9M3 12H9" stroke="#5a8ac8" stroke-width="1"/></svg>
    <div class="tr" style="left:44px;top:128px">文档</div>
    <svg class="abs" style="left:27px;top:149px" width="14" height="15" viewBox="0 0 14 15"><path d="M4.500 0H9.500V7H14L7 14.500L0 7H4.500z" fill="#2a86e0"/></svg>
    <div class="tr" style="left:44px;top:148px">下载</div>
    <svg class="abs" style="left:29px;top:169px" width="11" height="15" viewBox="0 0 11 15"><path d="M4.500 0Q5 4 10 6.500Q7 5.500 6 5V11.500A3 2.600 0 1 1 4.500 9z" fill="#1f8ae8"/></svg>
    <div class="tr" style="left:44px;top:168px">音乐</div>
    <svg class="abs" style="left:26px;top:191px" width="15" height="11" viewBox="0 0 15 11"><path d="M1 0H3V2H1zM4 0H6V2H4zM1 3H3V5H1zM4 3H6V5H4z" fill="#2a90e0"/><rect x="2" y="6.500" width="13" height="4" rx="1" fill="#6a6e76"/><rect x="3" y="7.500" width="11" height="1" fill="#b8bcc4"/></svg>
    <div class="tr" style="left:44px;top:188px">OS (C:)</div>
    <svg class="abs" style="left:26px;top:213px" width="15" height="8" viewBox="0 0 15 8"><rect x="1" y="2" width="13" height="5" rx="1" fill="#585c64"/><rect x="2" y="3" width="11" height="1.200" fill="#c8ccd4"/></svg>
    <div class="tr" style="left:44px;top:208px">文档 (D:)</div>
    <svg class="abs" style="left:19px;top:238px" width="16" height="10" viewBox="0 0 16 10"><path d="M0 8L6 4L10 5L15 1V8z" fill="#2f8fe0"/><path d="M6 4A5 5 0 0 1 15 3V9H6z" fill="#5ab0f0"/></svg>
    <div class="tr" style="left:37px;top:236px">网络</div>
  </div>
  <!-- tree scrollbar -->
  <div class="abs" style="left:116px;top:81px;width:13px;height:245px;background:#f0f0f0"></div>
  <div class="abs" style="left:116px;top:182px;width:13px;height:119px;background:#cdcdcd"></div>
  <svg class="abs" style="left:119px;top:86px" width="7" height="5" viewBox="0 0 7 5"><path d="M.5 4.500L3.500 1L6.500 4.500" fill="none" stroke="#444" stroke-width="1.400"/></svg>
  <svg class="abs" style="left:119px;top:316px" width="7" height="5" viewBox="0 0 7 5"><path d="M.5 .5L3.500 4L6.500 .5" fill="none" stroke="#444" stroke-width="1.400"/></svg>
  <!-- file list -->
  <div class="abs" id="fl" style="left:129px;top:81px;width:180px;height:245px;overflow:hidden;background:#fff">
    <svg class="abs" style="left:33px;top:15px" width="53" height="73" viewBox="0 0 53 73"><path d="M0 1.200L41 0V62H0z" fill="#edc965"/><path d="M36 9L52 11.500V63.500L36 66z" fill="#fbfbfb" stroke="#d4d4d4" stroke-width=".5"/><path d="M36 9L52 11.500V15L36 12.500z" fill="#3b66b4"/><path d="M38 18L50 19.500V24L38 22.500z" fill="#dfe6f2"/><path d="M14 12L36.800 17.500V67L15.300 71.500z" fill="#fdfdfd" stroke="#d0d0d0" stroke-width=".5"/><path d="M12 9.500L36.800 14.500V19.500L14 14z" fill="#3f6cba"/><path d="M16.500 22L27 24V33L16.500 31.500z" fill="#f5ee2e"/><path d="M17 37L33 39M17 41L33 43M17 45L33 47M17 49L33 51M17 53L33 55M17 57L30 58.500M17 61L33 62" stroke="#555" stroke-width="1.100" stroke-dasharray="2.500 .8"/><path d="M0 2.100L15.300 14.400V72.700L0 62z" fill="#f7dc8a"/></svg>
    <div class="fn" style="left:9px;top:86px">抖音</div>
    <svg class="abs" style="left:33px;top:114px" width="53" height="73" viewBox="0 0 53 73"><path d="M0 1.200L41 0V62H0z" fill="#edc965"/><path d="M36 9L52 11.500V63.500L36 66z" fill="#fbfbfb" stroke="#d4d4d4" stroke-width=".5"/><path d="M38 16L50 17.500V60L38 62z" fill="#efe6e4"/><path d="M38 20H50M38 25H50M38 30H50M38 35H50M38 40H50M38 45H50M38 50H50M38 55H50" stroke="#b9a8a4" stroke-width="1.600" stroke-dasharray="3 1"/><path d="M14 12L36.800 17.500V67L15.300 71.500z" fill="#f6f6f6" stroke="#d0d0d0" stroke-width=".5"/><path d="M15.300 28L36.800 31V50L15.300 50z" fill="#8aa0b4"/><path d="M15.300 36L27 38V46L15.300 46z" fill="#c9d6e2"/><path d="M15.300 50H36.800V58L15.300 60z" fill="#39424e"/><path d="M15.300 60L36.800 58V63L15.300 66z" fill="#c4b4d4"/><path d="M27 33L36.800 34V50H27z" fill="#5a6878"/><path d="M0 2.100L15.300 14.400V72.700L0 62z" fill="#f7dc8a"/></svg>
    <div class="fn" style="left:9px;top:185px">视频教程</div>
    <div class="abs" style="left:33px;top:207px;width:52px;height:40px;background:#cdcdcd;border:1px solid #dadada"></div>
  </div>
  <!-- list scrollbar -->
  <div class="abs" style="left:309px;top:81px;width:13px;height:245px;background:#f0f0f0"></div>
  <div class="abs" style="left:309px;top:95px;width:13px;height:24px;background:#cdcdcd"></div>
  <svg class="abs" style="left:312px;top:86px" width="7" height="5" viewBox="0 0 7 5"><path d="M.5 4.500L3.500 1L6.500 4.500" fill="none" stroke="#444" stroke-width="1.400"/></svg>
  <svg class="abs" style="left:312px;top:316px" width="7" height="5" viewBox="0 0 7 5"><path d="M.5 .5L3.500 4L6.500 .5" fill="none" stroke="#444" stroke-width="1.400"/></svg>
  <!-- preview pane -->
  <div class="abs" style="left:322px;top:81px;width:1px;height:245px;background:#ececec"></div>
  <div class="abs" style="left:323px;top:81px;width:303px;height:245px;background:#fff"></div>
  <div class="abs" style="left:375px;top:197px;width:200px;text-align:center;font-size:10px;line-height:14px;color:#6d6d6d">选择要预览的文件。</div>
  <!-- bottom area -->
  <div class="abs" style="left:0;top:326px;width:626px;height:66px;background:#f0f0f0"></div>
  <div class="abs" style="left:61px;top:339px;width:96px;text-align:right;font-size:10px;line-height:16px;color:#111">文件名(N):</div>
  <div class="abs" style="left:161px;top:335px;width:285px;height:22px;background:#fff;border:1px solid #2a8ad4"></div>
  <div class="abs" style="left:166px;top:339px;width:1px;height:14px;background:#111"></div>
  <svg class="abs" style="left:432px;top:343px" width="9" height="6" viewBox="0 0 9 6"><path d="M1 1L4.500 4.500L8 1" fill="none" stroke="#444" stroke-width="1.200"/></svg>
  <div class="abs" style="left:455px;top:335px;width:157px;height:22px;background:#e4e4e4;border:1px solid #adadad;font-size:10px;line-height:20px;color:#111;padding-left:4px;white-space:nowrap;overflow:hidden">所有支持的图片格式 (*.gif; *.tif</div>
  <div class="abs" style="left:596px;top:336px;width:15px;height:20px;background:#e4e4e4"></div>
  <svg class="abs" style="left:599px;top:343px" width="9" height="6" viewBox="0 0 9 6"><path d="M1 1L4.500 4.500L8 1" fill="none" stroke="#444" stroke-width="1.200"/></svg>
  <div class="abs" style="left:456px;top:362px;width:72px;height:20px;background:#e1e1e1;border:2px solid #2a7fd4;font-size:10px;line-height:16px;color:#111;text-align:center">打开(O)</div>
  <div class="abs" style="left:540px;top:362px;width:71px;height:20px;background:#e1e1e1;border:1px solid #adadad;font-size:10px;line-height:18px;color:#111;text-align:center">取消</div>
  <svg class="abs" style="left:614px;top:381px" width="10" height="10" viewBox="0 0 10 10"><g fill="#9aa0a8"><rect x="7" y="1" width="2" height="2"/><rect x="4" y="4" width="2" height="2"/><rect x="7" y="4" width="2" height="2"/><rect x="1" y="7" width="2" height="2"/><rect x="4" y="7" width="2" height="2"/><rect x="7" y="7" width="2" height="2"/></g></svg>
  <!-- cursor -->
  <svg class="abs" style="left:307.500px;top:163.500px" width="11" height="17.500" viewBox="0 0 12 19"><path d="M.7 .7V14.500L4 11.500L6.300 17.500L8.600 16.500L6.200 10.800H10.800z" fill="#fff" stroke="#222" stroke-width="1"/></svg>
</div>
<!-- overlays -->
<svg class="abs" style="left:470px;top:68px" width="160" height="92" viewBox="470 68 160 92"><path d="M609 74L615 85.500L518 141.500L512.500 152.500L480 152.800L499 122L505 130z" fill="#fff" filter="drop-shadow(0 0 1.500px rgba(0,0,0,.25))"/></svg>
<div class="abs" style="left:612px;top:24.500px;font-size:17.500px;line-height:22px;color:#fff;white-space:nowrap;text-shadow:0 0 1px rgba(0,0,0,.3)">gymssjs1</div>
<div class="abs" style="left:1175px;top:36px;width:12px;height:2px;background:#fff"></div>
<div class="abs" style="left:1211px;top:27px;width:12px;height:12px;border:2px solid #fff"></div>
<svg class="abs" style="left:1246px;top:26px" width="14" height="14" viewBox="0 0 14 14"><path d="M1.500 1.500L12.500 12.500M12.500 1.500L1.500 12.500" stroke="#fff" stroke-width="2.200"/></svg>
<div class="abs" style="left:40px;top:204px;font-size:30px;line-height:41.500px;color:#fff;white-space:nowrap;letter-spacing:0">批量处理功能<br>为用户节省<br>很多时间</div>
<!-- left vertical tab -->
<div class="abs" style="left:2px;top:302px;width:28px;height:120px;background:#262626;border-radius:0 10px 10px 0"></div>
<div class="abs" style="left:9px;top:316.500px;width:13px;font-size:11.500px;line-height:13.200px;color:#e6e6e6;text-align:center">领<br>腾<br>讯<br>视<br>频<br>礼<br>包</div>
<!-- timer bubble -->
<div class="abs" style="left:1127px;top:582.500px;width:31px;height:31px;border-radius:16px;background:linear-gradient(135deg,#5aa4f0,#2f7fe0);border:2px solid #e8f1fb;color:#e8f2ff;font-size:10px;line-height:28px;text-align:center">01:12</div>
<!-- watermark -->
<div class="abs" style="left:1040px;top:606px;width:234px;height:47px;background:linear-gradient(#fff 40%,#efefef);overflow:hidden">
  <div class="abs" id="wm" style="left:8px;top:12.500px;font:900 56px/64px 'Liberation Sans','Noto Sans CJK SC',sans-serif;color:#17469e;white-space:nowrap;letter-spacing:-2px">下载之家</div>
  <div class="abs" style="left:19px;top:42px;width:20px;height:20px;border-radius:10px;background:rgba(240,150,150,.5)"></div>
  <div class="abs" style="left:23px;top:45px;width:12px;height:12px;border-radius:6px;background:#ee2a34"></div>
</div>
<!-- edge strips -->
<div class="abs" style="left:0;top:0;width:1274px;height:1px;background:#2c2c2c"></div>
<div class="abs" style="left:0;top:0;width:326px;height:1px;background:linear-gradient(90deg,#fff 0 18px,#111 18px 31px,#fff 31px 168px,#1f9a8c 168px 217px,#fff 217px 221px,#1f9a8c 221px 234px,#fff 234px 277px,#1f9a8c 277px 326px)"></div>
<div class="abs" style="left:0;top:1px;width:1px;height:652px;background:linear-gradient(#fff 0 4px,#3f7fd0 4px 10px,#4a5050 10px 58px,#a0a0a0 58px 74px,#4a5050 74px 100px,#e6e6e6 100px 112px,#8a8a8a 112px 118px,#e6e6e6 118px 184px,#1f9a8c 184px 197px,#e6e6e6 197px 420px,#c4c4c4 420px)"></div>
<div class="abs" style="left:1px;top:1px;width:1px;height:652px;background:#1e1e1e"></div>
</div>
</body>
</html>
